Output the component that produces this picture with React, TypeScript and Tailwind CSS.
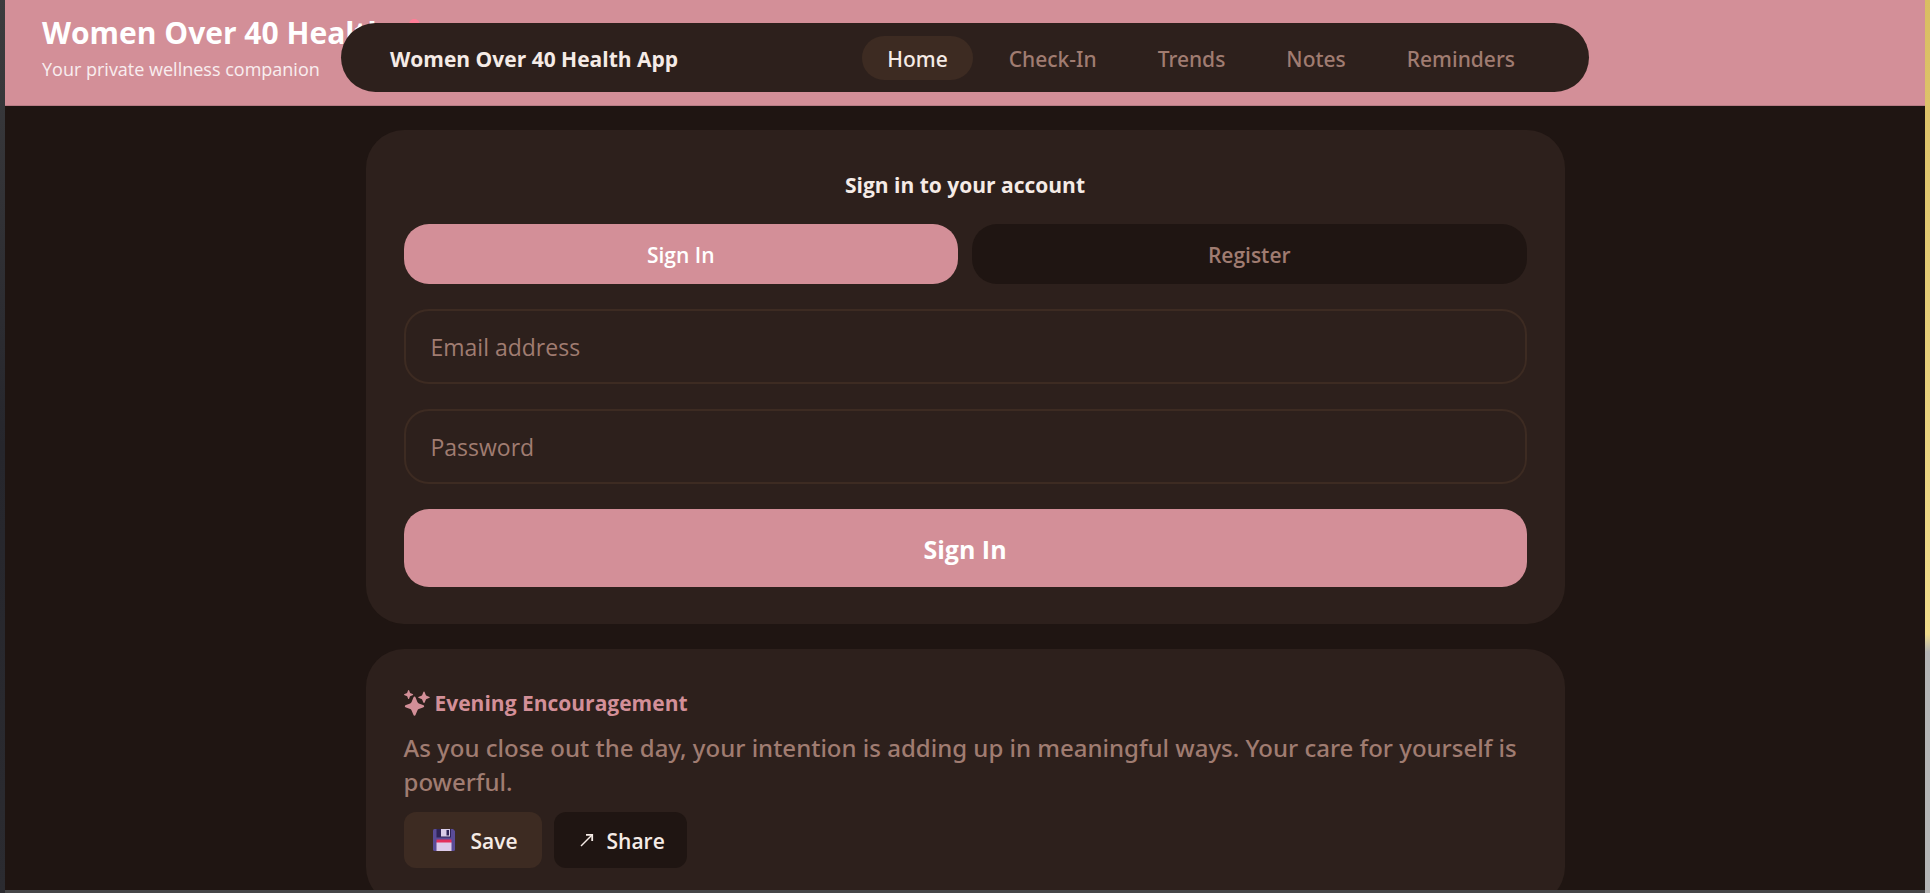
import React, { useState } from "react";

const navItems = ["Home", "Check-In", "Trends", "Notes", "Reminders"];

function SparkleIcon() {
  return (
    <svg viewBox="0 0 26 26" className="size-[26px] shrink-0" fill="currentColor" aria-hidden="true">
      <path d="M10.5 6.6Q11.3 6.6 11.7 7.8L13.4 12Q13.8 13 14.8 13.4L19 15Q20.2 15.5 20.2 16.2Q20.2 16.9 19 17.4L14.8 19Q13.8 19.4 13.4 20.4L11.7 24.6Q11.3 25.8 10.5 25.8Q9.7 25.8 9.3 24.6L7.6 20.4Q7.2 19.4 6.2 19L2 17.4Q0.8 16.9 0.8 16.2Q0.8 15.5 2 15L6.2 13.4Q7.2 13 7.6 12L9.3 7.8Q9.7 6.6 10.5 6.6Z" />
      <path d="M20 1.6Q20.5 1.6 20.8 2.4L21.8 5Q22 5.6 22.6 5.8L25 6.7Q25.8 7 25.8 7.4Q25.8 7.8 25 8.1L22.6 9Q22 9.2 21.8 9.8L20.8 12.2Q20.5 13 20 13Q19.5 13 19.2 12.2L18.2 9.8Q18 9.2 17.4 9L15 8.1Q14.2 7.8 14.2 7.4Q14.2 7 15 6.7L17.4 5.8Q18 5.6 18.2 5L19.2 2.4Q19.5 1.6 20 1.6Z" />
      <path d="M4.6 0Q5 0 5.2 0.6L5.9 2.6Q6.1 3.1 6.6 3.3L8.6 4Q9.2 4.2 9.2 4.6Q9.2 5 8.6 5.2L6.6 5.9Q6.1 6.1 5.9 6.6L5.2 8.4Q5 9 4.6 9Q4.2 9 4 8.4L3.3 6.6Q3.1 6.1 2.6 5.9L0.6 5.2Q0 5 0 4.6Q0 4.2 0.6 4L2.6 3.3Q3.1 3.1 3.3 2.6L4 0.6Q4.2 0 4.6 0Z" />
    </svg>
  );
}

function DiskIcon() {
  return (
    <svg viewBox="0 0 22 22" className="size-[22px] shrink-0" aria-hidden="true">
      <path d="M1.5 0H20L22 2V20.5Q22 22 20.5 22H1.5Q0 22 0 20.5V1.5Q0 0 1.5 0Z" fill="#5a4c97" />
      <path d="M3.5 0H18V8.5H3.5Z" fill="#2f2457" />
      <path d="M8 0H17V7.5H8Z" fill="#d9cdea" />
      <path d="M13.5 1H16V6.5H13.5Z" fill="#2f2457" />
      <path d="M3.5 10.5H18.5V14H3.5Z" fill="#e3305c" />
      <path d="M3.5 13.5H18.5V22H3.5Z" fill="#ddcbea" />
    </svg>
  );
}

function ArrowIcon() {
  return (
    <svg viewBox="0 0 14 14" className="size-[14px] shrink-0" fill="none" stroke="currentColor" strokeWidth="1.4" aria-hidden="true">
      <path d="M1 13L12 2" />
      <path d="M6 1.8H12.2V8" strokeWidth="1.8" />
    </svg>
  );
}

function HeartIcon() {
  return (
    <svg viewBox="0 0 32 30" className="h-[30px] w-8" fill="#ff7d97" aria-hidden="true">
      <path d="M10 8C10 3 12 1 15 1C19 1 21 3 20 8C19 13 15 18 11 20C6 17 1 13 2 9C3 6 8 5 10 8Z" />
    </svg>
  );
}

export default function App() {
  const [page, setPage] = useState("Home");
  const [mode, setMode] = useState("Sign In");
  const field =
    "h-[75px] w-full rounded-[25px] border-2 border-[#3d2b22] bg-transparent px-[25px] text-[23px] text-[#f5ebe6] outline-none placeholder:text-[#a07c71] placeholder:opacity-100";

  return (
    <div className="flex h-screen overflow-hidden bg-[#1f1512] font-['Open_Sans',sans-serif] text-[#f5ebe6]">
      <div className="w-[5px] shrink-0 bg-linear-to-b from-[#3c3c3e] via-[#26262c] to-[#2b2b30]" />
      <div className="relative flex min-w-0 flex-1 flex-col border-b-3 border-[#464648]">
        <header className="h-[106px] shrink-0 border-b border-[#b87c85] bg-[#d38f98] px-[37px] pt-3 text-white">
          <h1 className="flex items-center gap-3 text-[30px] leading-[42px] font-bold whitespace-nowrap">
            Women Over 40 Health <HeartIcon />
          </h1>
          <p className="text-[18px] leading-[30px] text-white/85">Your private wellness companion</p>
        </header>

        <nav className="absolute inset-x-0 top-[23px] mx-auto flex h-[69px] w-full max-w-[1248px] items-center justify-between rounded-full bg-[#2d201c] px-[49px]">
          <span className="pt-1 text-[21px] font-bold">Women Over 40 Health App</span>
          <div className="flex items-center gap-[11px]">
            {navItems.map((item) => (
              <a
                key={item}
                href="#"
                onClick={() => setPage(item)}
                className={
                  "flex h-11 items-center rounded-[22px] px-[25px] pt-1 font-['Noto_Sans',sans-serif] text-[21px] font-medium " +
                  (item === page ? "bg-[#3d2b22] text-[#f5ebe6]" : "text-[#a07c71]")
                }
              >
                {item}
              </a>
            ))}
          </div>
        </nav>

        <main className="mx-auto flex min-h-0 w-full max-w-[1199px] flex-1 flex-col gap-[25px] overflow-hidden pt-6">
          <section className="shrink-0 rounded-[38px] bg-[#2d201c] px-[38px] pt-[38px] pb-[37px]">
            <h2 className="text-center text-[21px] leading-[34px] font-bold">Sign in to your account</h2>
            <div className="mt-[22px] grid grid-cols-2 gap-[14px]">
              {["Sign In", "Register"].map((label) => (
                <button
                  key={label}
                  type="button"
                  onClick={() => setMode(label)}
                  className={
                    "h-[60px] rounded-[25px] pt-1 text-[21px] font-semibold " +
                    (label === mode ? "bg-[#d38f98] text-white" : "bg-[#1f1512] text-[#a07c71]")
                  }
                >
                  {label}
                </button>
              ))}
            </div>
            <form className="mt-[25px] flex flex-col gap-[25px]" onSubmit={(e) => e.preventDefault()}>
              <input type="email" aria-label="Email address" placeholder="Email address" className={field} />
              <input type="password" aria-label="Password" placeholder="Password" className={field} />
              <button type="submit" className="h-[78px] rounded-[25px] bg-[#d38f98] pt-1 text-[25px] font-bold text-white">
                {mode}
              </button>
            </form>
          </section>

          <section className="shrink-0 rounded-[38px] bg-[#2d201c] px-[38px] pt-[37px] pb-[37px]">
            <h2 className="flex items-center gap-[5px] text-[21px] leading-[34px] font-bold text-[#d38f98]">
              <SparkleIcon />
              Evening Encouragement
            </h2>
            <p className="mt-[11px] font-['Noto_Sans',sans-serif] text-[24px] leading-[34px] font-medium text-[#a07c71]">
              As you close out the day, your intention is adding up in meaningful ways. Your care for yourself is powerful.
            </p>
            <div className="mt-[13px] flex gap-3">
              <button type="button" className="flex h-14 items-center gap-4 rounded-xl bg-[#3d2b22] pr-6 pl-[29px] text-[21px] font-semibold">
                <DiskIcon />
                <span className="pt-1">Save</span>
              </button>
              <button type="button" className="flex h-14 items-center gap-[13px] rounded-xl bg-[#1f1512] pr-[22px] pl-[26px] text-[21px] font-semibold">
                <ArrowIcon />
                <span className="pt-1">Share</span>
              </button>
            </div>
          </section>
        </main>
      </div>
      <div className="w-[5px] shrink-0 bg-linear-to-b from-[#d9bd62] from-0% via-[#f0dc8c] via-71% to-[#b5b5b5] to-73%" />
    </div>
  );
}
